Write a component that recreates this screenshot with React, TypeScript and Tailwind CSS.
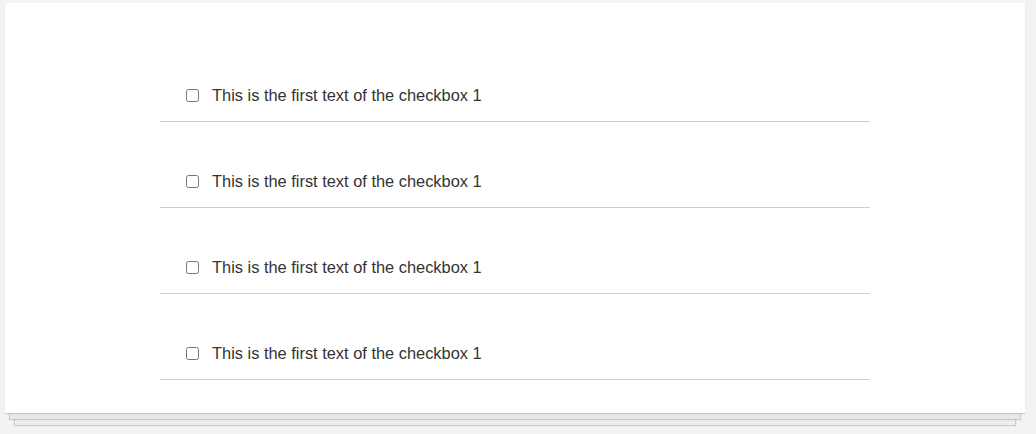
import { useState } from 'react'

const items = [1, 2, 3, 4].map((i) => ({ id: i, label: 'This is the first text of the checkbox 1' }))

export default function App() {
  const [checked, setChecked] = useState<Record<number, boolean>>({})

  return (
    <div className="min-h-[434px] bg-[#f3f3f3] pt-[3px] pl-[5px] font-['Liberation_Sans',Arial,sans-serif]">
      <div className="w-[1020px] bg-white py-[33px] shadow-[0_1px_1px_rgba(0,0,0,0.15),0_11px_0_-5px_#e9e9e9,0_11px_1px_-4px_rgba(0,0,0,0.15),0_22px_0_-10px_#eeeeee,0_22px_1px_-9px_rgba(0,0,0,0.15)]">
        <ul className="mx-auto w-[710px]">
          {items.map((it) => (
            <li key={it.id} className="border-b border-[#cfcfcf] pl-[26px] pt-[50px] pb-[17px]">
              <label className="flex h-[18px] items-center text-[16.4px] leading-[18px] text-[#333]">
                <input
                  type="checkbox"
                  className="m-0 h-[13px] w-[13px]"
                  checked={!!checked[it.id]}
                  onChange={() => setChecked({ ...checked, [it.id]: !checked[it.id] })}
                />
                <span className="ml-[13px]">{it.label}</span>
              </label>
            </li>
          ))}
        </ul>
      </div>
    </div>
  )
}
